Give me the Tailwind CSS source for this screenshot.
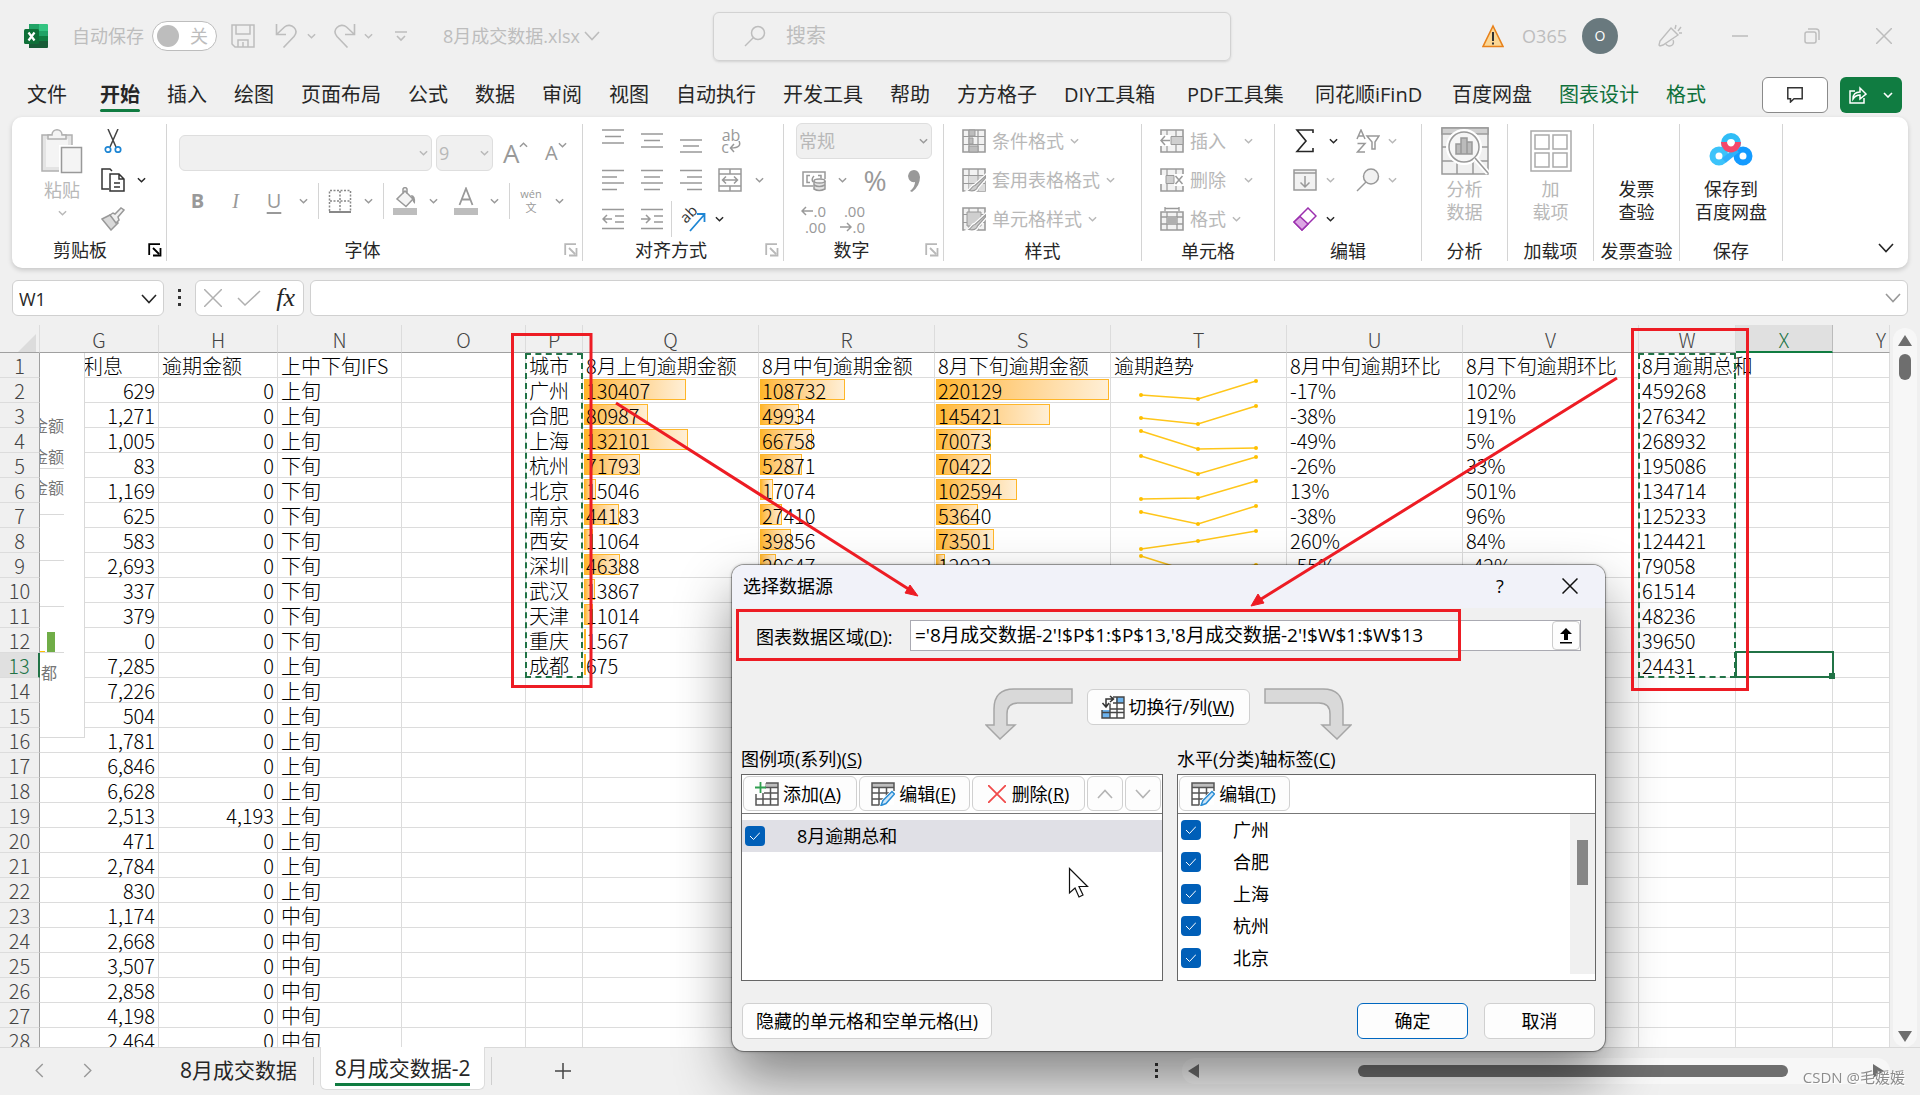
<!DOCTYPE html>
<html lang="zh-CN">
<head>
<meta charset="utf-8">
<meta name="viewport" content="width=device-width, initial-scale=1">
<title>8月成交数据.xlsx - Excel</title>
<script src="https://cdn.jsdelivr.net/npm/@tailwindcss/browser@4"></script>
</head>
<body class="relative flex h-screen flex-col overflow-hidden bg-[#f0f0f0] font-['Open_Sans','Noto_Sans_CJK_SC',sans-serif] text-lg text-[#262626]">

<svg class="hidden" aria-hidden="true">
  <symbol id="chev" viewBox="0 0 10 6"><path d="M1 1l4 4 4-4" fill="none" stroke="currentColor" stroke-width="1.6"/></symbol>
  <symbol id="chevL" viewBox="0 0 16 10"><path d="M1 1l7 7.5L15 1" fill="none" stroke="currentColor" stroke-width="1.6"/></symbol>
  <symbol id="launch" viewBox="0 0 14 14"><path d="M1.2 12V1.2H12M5 5l6 6M12.500 5v7.500H5" fill="none" stroke="currentColor" stroke-width="1.8"/></symbol>
  <symbol id="gridIcon" viewBox="0 0 24 24"><path d="M1 1h22v22H1z" fill="#f2f2f2" stroke="#9a9a9a" stroke-width="1.6"/><path d="M1 7.500h22M1 15.500h22M7 1v22M16 1v22" stroke="#9a9a9a" stroke-width="1.2" fill="none"/></symbol>
  <symbol id="brushOver" viewBox="0 0 24 24"><path d="M24 7L13 17c-3 0-3 4-7 6 5 1.500 9 0 10-4L24 10z" fill="#c4c4c4" stroke="#fff" stroke-width="3"/><path d="M23.500 8L13 17.500c-3 0-3 3.500-6 5 4 1 8 0 8.500-3.500L23.500 10z" fill="#cfcfcf" stroke="#9a9a9a" stroke-width="1.2"/></symbol>
  <symbol id="editTable" viewBox="0 0 24 24"><path d="M1 1h22v22H1z" fill="#fff"/><path d="M1 1h22v4H1z" fill="#bdbdbd"/><path d="M11 23H1V1h22v8M1 5.500h22M1 11h17M1 17h12M8 5v18M15.500 5v9" fill="none" stroke="#555" stroke-width="1.500"/><path d="M10 23.500l2-5L21 9.500l2.500 2.500-8.500 9.500z" fill="#9fd0f5" stroke="#fff" stroke-width="3"/><path d="M10 23.500l2-5L21 9.500l2.500 2.500-8.500 9.500z" fill="#cfe6f8" stroke="#2a8dd4" stroke-width="1.500"/></symbol>
</svg>

<!-- Title bar -->
<header class="grid h-[72px] shrink-0 grid-cols-[713fr_518fr_689fr] items-center text-[#bdbdbd]">
  <div class="flex items-center pl-6">
    <svg class="h-6 w-6" viewBox="0 0 24 24"><path d="M5 1h19v22H5z" fill="#21a366"/><path d="M15 0h8a1 1 0 011 1v6h-9z" fill="#33c481"/><path d="M5 0h10v7H5z" fill="#21a366"/><path d="M5 7h10v10H5z" fill="#107c41"/><path d="M15 12h9v5h-9z" fill="#107c41"/><path d="M5 17h19v6a1 1 0 01-1 1H5z" fill="#185c37"/><rect y="5" width="15" height="15" rx="1.500" fill="#0f7038"/><path d="M4.500 8.500l6 8M10.500 8.500l-6 8" stroke="#fff" stroke-width="2.200"/></svg>
    <label class="ml-6 flex items-center gap-2">自动保存
      <input type="checkbox" class="sr-only">
      <span class="flex h-[30px] w-[65px] items-center justify-between rounded-full border-[1.5px] border-[#bdbdbd] bg-white pr-2 pl-1"><span class="h-[22px] w-[22px] rounded-full bg-[#bdbdbd]"></span>关</span>
    </label>
    <button aria-label="保存" class="ml-[14px]"><svg class="h-6 w-6" viewBox="0 0 24 24" fill="none" stroke="currentColor" stroke-width="1.500"><path d="M1 1h22v22H4l-3-3zM5 1v9h14V1M7 23v-7h10v7M12 18v5"/></svg></button>
    <button aria-label="撤消" class="ml-5"><svg class="h-6 w-6" viewBox="0 0 24 24" fill="none" stroke="currentColor" stroke-width="1.600"><path d="M1.500 0v10.500H11M1.500 10.500L9.500 3c3-2.500 7-2 9.500.500s2.500 6 0 9L8.500 23.500"/></svg></button>
    <svg class="ml-2 h-[6px] w-[9px]"><use href="#chev"/></svg>
    <button aria-label="恢复" class="ml-4"><svg class="h-6 w-6" viewBox="0 0 24 24" fill="none" stroke="currentColor" stroke-width="1.600"><path d="M22.500 0v10.500H13M22.500 10.500L14.500 3c-3-2.500-7-2-9.500.500s-2.500 6 0 9l10.500 11"/></svg></button>
    <svg class="ml-2 h-[6px] w-[9px]"><use href="#chev"/></svg>
    <svg class="ml-[22px] h-3 w-3" viewBox="0 0 12 12" fill="none" stroke="currentColor" stroke-width="1.600"><path d="M0 2h12M2 6l4 4 4-4"/></svg>
    <span class="ml-9">8月成交数据.xlsx</span>
    <svg class="ml-1 h-[10px] w-4"><use href="#chevL"/></svg>
  </div>
  <label class="flex h-[49px] items-center gap-5 rounded-md border border-[#d2d2d2] pl-[30px] text-xl shadow-sm">
    <svg class="h-[22px] w-[22px]" viewBox="0 0 22 22" fill="none" stroke="currentColor" stroke-width="1.500"><circle cx="14" cy="8" r="6.500"/><path d="M9.500 12.500L1 21"/></svg>
    <input aria-label="搜索" placeholder="搜索" class="w-full flex-1 bg-transparent outline-none placeholder:text-[#bdbdbd]">
  </label>
  <div class="flex items-center justify-end">
    <svg class="mr-[18px] h-6 w-[22px]" viewBox="0 0 22 24"><path d="M11 2L21 22.500H1z" fill="#fbd795" stroke="#e8811a" stroke-width="1.600"/><path d="M11 8v9M11 18.500v2" stroke="#333" stroke-width="2"/></svg>
    <span class="mr-[15px]">O365</span>
    <span class="mr-[18px] grid h-9 w-9 place-items-center rounded-full bg-[#69797e] text-sm text-white">O</span>
    <button aria-label="即将推出" class="grid w-[68px] place-items-center"><svg class="h-6 w-6" viewBox="0 0 24 24" fill="none" stroke="currentColor" stroke-width="1.400"><path d="M13 4l7 7L5 21l-3 1-1-1 1-4zM8 20a4 4 0 007-4M17 5l1-4M20 7l3-4M21 9h3"/></svg></button>
    <button aria-label="最小化" class="grid w-[72px] place-items-center"><svg class="h-4 w-4" viewBox="0 0 16 16"><path d="M0 8h16" stroke="currentColor" stroke-width="1.500"/></svg></button>
    <button aria-label="还原" class="grid w-[72px] place-items-center"><svg class="h-4 w-4" viewBox="0 0 16 16" fill="none" stroke="currentColor" stroke-width="1.500"><rect x="1" y="4" width="11" height="11" rx="2"/><path d="M4 1h8a3 3 0 013 3v8"/></svg></button>
    <button aria-label="关闭" class="grid w-[72px] place-items-center"><svg class="h-4 w-4" viewBox="0 0 16 16"><path d="M0 0l16 16M16 0L0 16" stroke="currentColor" stroke-width="1.500"/></svg></button>
  </div>
</header>

<!-- Ribbon tabs -->
<nav class="flex h-[45px] shrink-0 items-center gap-[27px] pr-[18px] pl-[27px] text-xl whitespace-nowrap">
  <a href="#" class="mr-[6px]">文件</a>
  <a href="#" class="relative font-bold">开始<span class="absolute inset-x-0 -bottom-[3px] h-[3px] rounded-sm bg-[#107c41]"></span></a>
  <a href="#">插入</a><a href="#">绘图</a><a href="#">页面布局</a><a href="#">公式</a><a href="#">数据</a><a href="#">审阅</a><a href="#">视图</a><a href="#">自动执行</a><a href="#">开发工具</a><a href="#">帮助</a><a href="#">方方格子</a><a href="#" class="min-w-24">DIY工具箱</a><a href="#" class="min-w-[101px]">PDF工具集</a><a href="#" class="min-w-[110px]">同花顺iFinD</a><a href="#">百度网盘</a>
  <a href="#" class="text-[#0f703b]">图表设计</a><a href="#" class="text-[#0f703b]">格式</a>
  <div class="ml-auto flex gap-3">
    <button aria-label="批注" class="grid h-9 w-[66px] place-items-center rounded-md border border-[#8a8a8a] bg-white"><svg class="h-4 w-4" viewBox="0 0 16 16" fill="none" stroke="#333" stroke-width="1.500"><path d="M.8.800h14.400v11H7L3.500 15v-3.200H.8z"/></svg></button>
    <button aria-label="共享" class="flex h-9 w-[62px] items-center justify-center gap-4 rounded-md bg-[#107c41] text-white"><svg class="h-[18px] w-[18px]" viewBox="0 0 18 18" fill="none" stroke="currentColor" stroke-width="1.500"><path d="M6 5H1v12h14v-5M4 13c0-5 3-7 7-7V2l6 6-6 5V9c-3 0-5 1-7 4z"/></svg><svg class="h-[6px] w-[10px]"><use href="#chev"/></svg></button>
  </div>
</nav>

<!-- Ribbon -->
<section class="mx-3 flex h-[151px] shrink-0 rounded-[10px] bg-white py-[7px] whitespace-nowrap text-[#b8b8b8] shadow-[0_2px_5px_rgba(0,0,0,0.18)]">
  <div class="flex w-[155px] shrink-0 flex-col border-r border-[#d4d4d4]">
    <div class="-mt-px flex flex-1">
      <button class="ml-[25px] flex w-[50px] flex-col items-center pt-[6px] leading-6">
        <svg class="h-[45px] w-[42px]" viewBox="0 0 42 45"><path d="M1 6h30v36H1z" fill="#e4e4e4" stroke="#b0b0b0" stroke-width="1.500"/><path d="M5 10h22v28H5z" fill="#f4f4f4"/><path d="M7 10V6h4c0-7 10-7 10 0h4v4z" fill="#f4f4f4" stroke="#b0b0b0" stroke-width="1.500"/><path d="M20 18h21v26H20z" fill="#f4f4f4" stroke="#fff" stroke-width="4"/><path d="M20.500 18.500h20v25h-20z" fill="#f4f4f4" stroke="#999" stroke-width="1.500"/></svg>
        <span class="mt-1">粘贴</span>
        <svg class="mt-2 h-[6px] w-[9px]"><use href="#chev"/></svg>
      </button>
      <div class="-mt-[2px] ml-[14px] flex flex-col text-[#262626]">
        <button aria-label="剪切" class="flex h-[39px] w-6 items-center justify-center"><svg class="h-6 w-[18px]" viewBox="0 0 18 24" fill="none"><path d="M4 0l8 18M14 0L6 18" stroke="#444" stroke-width="1.500"/><circle cx="4" cy="20.500" r="2.700" stroke="#1e86d4" stroke-width="1.700"/><circle cx="14" cy="20.500" r="2.700" stroke="#1e86d4" stroke-width="1.700"/></svg></button>
        <button aria-label="复制" class="flex h-[39px] items-center gap-3"><svg class="h-6 w-6" viewBox="0 0 24 24" fill="#fff" stroke="#333" stroke-width="1.500"><path d="M8 21H1V1h8l2 2"/><path d="M9 6h9l5 5v12H9zM18 6v5h5M13 15h6M13 19h6"/></svg><svg class="h-[6px] w-[9px]"><use href="#chev"/></svg></button>
        <button aria-label="格式刷" class="flex h-[39px] items-center"><svg class="h-6 w-6" viewBox="0 0 24 24" stroke="#999" stroke-width="1.500"><path d="M1 12l8-4 8 8-7 7z" fill="#d9d9d9"/><path d="M9 8l3-2 2 1 6-6 3 2-6 7 1 3-3 3z" fill="#f0f0f0"/></svg></button>
      </div>
    </div>
    <div class="flex h-[22px] items-center text-black"><span class="flex-1 text-center leading-6 text-[#262626]">剪贴板</span><svg class="mr-1 h-[14px] w-[14px]"><use href="#launch"/></svg></div>
  </div>

  <div class="flex w-[416px] shrink-0 flex-col border-r border-[#d4d4d4]">
    <div class="flex-1 pt-[11px] pl-3">
      <div class="flex h-9 items-center gap-1">
        <div class="grid w-[253px] items-center"><select aria-label="字体" disabled class="col-start-1 row-start-1 h-9 w-full appearance-none rounded-md border border-[#dedede] bg-[#f0f0f0]"><option></option></select><svg class="col-start-1 row-start-1 mr-1 h-[6px] w-[9px] justify-self-end"><use href="#chev"/></svg></div>
        <div class="grid w-[57px] items-center"><select aria-label="字号" disabled class="col-start-1 row-start-1 h-9 w-full appearance-none rounded-md border border-[#dedede] bg-[#f0f0f0] pl-[2px]"><option>9</option></select><svg class="col-start-1 row-start-1 mr-1 h-[6px] w-[9px] justify-self-end"><use href="#chev"/></svg></div>
        <button aria-label="增大字号" class="ml-[6px] flex h-9 w-[38px] items-center text-[26px] text-[#999]">A<svg class="mb-4 h-[6px] w-[9px] rotate-180"><use href="#chev"/></svg></button>
        <button aria-label="减小字号" class="flex h-9 w-[30px] items-center text-xl text-[#999]">A<svg class="mb-4 h-[6px] w-[9px]"><use href="#chev"/></svg></button>
      </div>
      <div class="mt-3 flex h-9 items-center text-xl text-[#999]">
        <button class="w-[37px] font-bold">B</button>
        <button class="w-[39px] font-['Liberation_Serif',serif] italic">I</button>
        <button class="ml-px w-9 underline underline-offset-4">U</button>
        <span class="grid w-[22px] place-items-center"><svg class="h-[6px] w-[9px]"><use href="#chev"/></svg></span>
        <span class="mr-[3px] ml-1 h-9 w-px bg-[#d4d4d4]"></span>
        <button aria-label="边框" class="grid w-9 place-items-center"><svg class="h-6 w-6" viewBox="0 0 24 24" fill="none" stroke="#888"><path d="M1.500 22V1.500h21V22M12 2v20M2 12h20" stroke-width="1.500" stroke-dasharray="2 1.500"/><path d="M1 23h22" stroke-width="2"/></svg></button>
        <span class="grid w-5 place-items-center"><svg class="h-[6px] w-[9px]"><use href="#chev"/></svg></span>
        <span class="mr-[3px] ml-[5px] h-9 w-px bg-[#d4d4d4]"></span>
        <button aria-label="填充颜色" class="grid w-9 place-items-center"><svg class="h-7 w-6" viewBox="0 0 24 28"><path d="M12 4l8 8-7 7.500L4 12zM10 7V2q2-3 4 0v5" fill="#f4f4f4" stroke="#999" stroke-width="1.500"/><path d="M18 8q5 0 4 9-2-1-3-5z" fill="#999"/><path d="M0 21h24v7H0z" fill="#bdbdbd"/></svg></button>
        <span class="mr-[5px] grid w-5 place-items-center"><svg class="h-[6px] w-[9px]"><use href="#chev"/></svg></span>
        <button aria-label="字体颜色" class="grid w-9 place-items-center"><svg class="h-7 w-6" viewBox="0 0 24 28"><path d="M5.500 18L12 1.500 18.500 18M8 12.500h8" fill="none" stroke="#999" stroke-width="1.800"/><path d="M0 21h24v7H0z" fill="#bdbdbd"/></svg></button>
        <span class="grid w-5 place-items-center"><svg class="h-[6px] w-[9px]"><use href="#chev"/></svg></span>
        <span class="mr-[3px] ml-[5px] h-9 w-px bg-[#d4d4d4]"></span>
        <button class="flex w-9 flex-col items-center text-[11px] leading-[14px]"><span>wén</span><span>文</span></button>
        <span class="grid w-5 place-items-center"><svg class="h-[6px] w-[9px]"><use href="#chev"/></svg></span>
      </div>
    </div>
    <div class="flex h-[22px] items-center"><span class="flex-1 pr-[6px] text-center leading-6 text-[#262626]">字体</span><svg class="mr-1 h-[14px] w-[14px]"><use href="#launch"/></svg></div>
  </div>

  <div class="flex w-[201px] shrink-0 flex-col border-r border-[#d4d4d4]">
    <div class="-mt-[3px] flex-1 pl-[10px] text-[#999]">
      <div class="flex h-[39px] items-center">
        <button aria-label="顶端对齐" class="grid w-[39px] place-items-center"><svg class="h-6 w-[22px]" viewBox="0 0 22 24" stroke="currentColor" stroke-width="1.500"><path d="M0 1h22M3 7.500h16M0 14h22"/></svg></button>
        <button aria-label="垂直居中" class="grid w-[39px] place-items-center"><svg class="h-6 w-[22px]" viewBox="0 0 22 24" stroke="currentColor" stroke-width="1.500"><path d="M0 5h22M3 11.500h16M0 18h22"/></svg></button>
        <button aria-label="底端对齐" class="grid w-[39px] place-items-center"><svg class="h-6 w-[22px]" viewBox="0 0 22 24" stroke="currentColor" stroke-width="1.500"><path d="M0 11h22M3 17h16M0 23h22"/></svg></button>
        <button aria-label="自动换行" class="flex w-[42px] flex-col items-center text-base leading-3"><span>ab</span><span class="flex items-center">c<svg class="h-3 w-3" viewBox="0 0 12 12" fill="none" stroke="currentColor" stroke-width="1.500"><path d="M10 0c2 4 0 7-8 7M5 3L1.500 7 5 11"/></svg></span></button>
      </div>
      <div class="flex h-[39px] items-center">
        <button aria-label="左对齐" class="grid w-[39px] place-items-center"><svg class="h-6 w-[22px]" viewBox="0 0 22 24" stroke="currentColor" stroke-width="1.500"><path d="M0 2.500h22M0 9h15M0 15h22M0 21.500h15"/></svg></button>
        <button aria-label="居中" class="grid w-[39px] place-items-center"><svg class="h-6 w-[22px]" viewBox="0 0 22 24" stroke="currentColor" stroke-width="1.500"><path d="M0 2.500h22M3 9h16M0 15h22M3 21.500h16"/></svg></button>
        <button aria-label="右对齐" class="grid w-[39px] place-items-center"><svg class="h-6 w-[22px]" viewBox="0 0 22 24" stroke="currentColor" stroke-width="1.500"><path d="M0 2.500h22M7 9h15M0 15h22M7 21.500h15"/></svg></button>
        <button aria-label="合并后居中" class="grid w-[39px] place-items-center"><svg class="h-6 w-6" viewBox="0 0 24 24" fill="none" stroke="#999" stroke-width="1.500"><path d="M1 1h22v22H1zM1 6h22M1 18h22M12 1v5M12 18v5M5 12h14M8 8.500L4.500 12 8 15.500M16 8.500l3.500 3.500-3.500 3.500"/></svg></button>
        <span class="grid w-5 place-items-center"><svg class="h-[6px] w-[9px]"><use href="#chev"/></svg></span>
      </div>
      <div class="flex h-[39px] items-center">
        <button aria-label="减少缩进" class="grid w-[39px] place-items-center"><svg class="h-6 w-[22px]" viewBox="0 0 22 24" fill="none" stroke="currentColor" stroke-width="1.500"><path d="M0 2.500h22M13 9h9M13 15h9M0 21.500h22M1 12h9M5 8l-4 4 4 4"/></svg></button>
        <button aria-label="增加缩进" class="grid w-[39px] place-items-center"><svg class="h-6 w-[22px]" viewBox="0 0 22 24" fill="none" stroke="currentColor" stroke-width="1.500"><path d="M0 2.500h22M13 9h9M13 15h9M0 21.500h22M0 12h9M5 8l4 4-4 4"/></svg></button>
        <span class="h-9 w-px bg-[#d4d4d4]"></span>
        <button aria-label="方向" class="flex w-[52px] items-center justify-end gap-2 text-[#262626]"><svg class="h-7 w-7 overflow-visible" viewBox="0 0 28 28" fill="none"><text x="7" y="19" transform="rotate(-45 7 19)" font-size="15" fill="#333">ab</text><path d="M11 26L25 10M18 9h7.500v8" stroke="#1e86d4" stroke-width="1.800"/></svg><svg class="h-[6px] w-[9px]"><use href="#chev"/></svg></button>
      </div>
    </div>
    <div class="flex h-[22px] items-center"><span class="flex-1 pr-[6px] text-center leading-6 text-[#262626]">对齐方式</span><svg class="mr-1 h-[14px] w-[14px]"><use href="#launch"/></svg></div>
  </div>

  <div class="flex w-[160px] shrink-0 flex-col border-r border-[#d4d4d4]">
    <div class="-mt-[3px] flex-1 pl-3 text-[#999]">
      <div class="grid h-[39px] w-[136px] items-center"><select aria-label="数字格式" disabled class="col-start-1 row-start-1 h-9 w-full appearance-none rounded-md border border-[#dedede] bg-[#f0f0f0] pl-[2px] text-[#b8b8b8]"><option>常规</option></select><svg class="col-start-1 row-start-1 mr-1 h-[6px] w-[9px] justify-self-end"><use href="#chev"/></svg></div>
      <div class="flex h-[39px] items-center">
        <button aria-label="会计数字格式" class="grid w-9 place-items-center"><svg class="h-6 w-6" viewBox="0 0 24 24" fill="none" stroke="#999" stroke-width="1.500"><path d="M11 18H1V4h22v7M8 7.500H5v7h3M12 8q-3 3-1 6M16 7.500h3v3"/><path d="M12 13v8q5 3 11 0v-8" fill="#e4e4e4"/><ellipse cx="17.500" cy="13" rx="5.500" ry="2" fill="#f4f4f4"/><path d="M12 17q5 3 11 0"/></svg></button>
        <span class="grid w-5 place-items-center"><svg class="h-[6px] w-[9px]"><use href="#chev"/></svg></span>
        <button class="w-[46px] text-[28px] leading-8">%</button>
        <button aria-label="千位分隔样式" class="grid w-8 place-items-center"><svg class="h-6 w-3" viewBox="0 0 12 24"><path d="M2 23q5-4 5-9-6 1-7-6 1-6 6-6t6 7q0 9-8 15z" fill="#999"/></svg></button>
      </div>
      <div class="flex h-[39px] items-center text-[15px] leading-[16px]">
        <button aria-label="增加小数位数" class="w-[30px]"><span class="flex items-center justify-end"><svg class="h-[10px] w-3" viewBox="0 0 12 10" fill="none" stroke="currentColor" stroke-width="1.500"><path d="M12 5H1M5 1L1 5l4 4"/></svg>.0</span><span class="block text-right">.00</span></button>
        <button aria-label="减少小数位数" class="w-[39px]"><span class="block text-right">.00</span><span class="flex items-center justify-end"><svg class="h-[10px] w-3" viewBox="0 0 12 10" fill="none" stroke="currentColor" stroke-width="1.500"><path d="M0 5h11M7 1l4 4-4 4"/></svg>.0</span></button>
      </div>
    </div>
    <div class="flex h-[22px] items-center"><span class="flex-1 pr-[6px] text-center leading-6 text-[#262626]">数字</span><svg class="mr-1 h-[14px] w-[14px]"><use href="#launch"/></svg></div>
  </div>

  <div class="flex w-[198px] shrink-0 flex-col border-r border-[#d4d4d4]">
    <div class="-mt-[3px] flex flex-1 flex-col items-start pl-[18px]">
      <button class="flex h-[39px] items-center gap-[6px]"><svg class="h-6 w-6" viewBox="0 0 24 24"><use href="#gridIcon"/><path d="M7 1h6v6H7zM7 9h4v6H7zM7 17h9v6H7z" fill="#bdbdbd" stroke="#9a9a9a"/></svg>条件格式<svg class="h-[6px] w-[9px]"><use href="#chev"/></svg></button>
      <button class="flex h-[39px] items-center gap-[6px]"><svg class="h-6 w-6" viewBox="0 0 24 24"><use href="#gridIcon"/><path d="M7 8h16v15H7z" fill="#dcdcdc"/><path d="M7 15.500h16M16 8v15" stroke="#9a9a9a"/><use href="#brushOver"/></svg>套用表格格式<svg class="h-[6px] w-[9px]"><use href="#chev"/></svg></button>
      <button class="flex h-[39px] items-center gap-[6px]"><svg class="h-6 w-6" viewBox="0 0 24 24"><use href="#gridIcon"/><path d="M5 5h14v14H5z" fill="#cfcfcf" stroke="#9a9a9a"/><use href="#brushOver"/></svg>单元格样式<svg class="h-[6px] w-[9px]"><use href="#chev"/></svg></button>
    </div>
    <div class="h-[22px] text-center leading-6 text-[#262626]">样式</div>
  </div>

  <div class="flex w-[133px] shrink-0 flex-col border-r border-[#d4d4d4]">
    <div class="-mt-[3px] flex flex-1 flex-col items-start pl-[18px]">
      <button class="flex h-[39px] items-center gap-[6px]"><svg class="h-6 w-6" viewBox="0 0 24 24"><use href="#gridIcon"/><path d="M0 6h11v11H0z" fill="#fff"/><path d="M11 7.500h12v8H11z" fill="#cfcfcf" stroke="#9a9a9a"/><path d="M10 11.500H1M5 7l-4 4.500L5 16" fill="none" stroke="#9a9a9a" stroke-width="1.500"/></svg>插入<svg class="ml-3 h-[6px] w-[9px]"><use href="#chev"/></svg></button>
      <button class="flex h-[39px] items-center gap-[6px]"><svg class="h-6 w-6" viewBox="0 0 24 24"><use href="#gridIcon"/><path d="M0 7h6v9H0zM14 6h10v12H14z" fill="#fff"/><path d="M6 7.500h8v8H6z" fill="#cfcfcf" stroke="#9a9a9a"/><path d="M15.500 8l7 8M22.500 8l-7 8" stroke="#9a9a9a" stroke-width="1.500"/></svg>删除<svg class="ml-3 h-[6px] w-[9px]"><use href="#chev"/></svg></button>
      <button class="flex h-[39px] items-center gap-[6px]"><svg class="h-6 w-6" viewBox="0 0 24 24"><path d="M1 5h22v18H1z" fill="#f2f2f2" stroke="#9a9a9a" stroke-width="1.600"/><path d="M1 10h22M1 17h22M7 5v18M17 5v18M5 1.500h14M5 0v4M19 0v4" stroke="#9a9a9a" stroke-width="1.300"/><path d="M7 10h10v7H7z" fill="#b0b0b0"/></svg>格式<svg class="h-[6px] w-[9px]"><use href="#chev"/></svg></button>
    </div>
    <div class="h-[22px] text-center leading-6 text-[#262626]">单元格</div>
  </div>

  <div class="flex w-[147px] shrink-0 flex-col border-r border-[#d4d4d4]">
    <div class="-mt-[3px] grid flex-1 grid-cols-[63px_1fr] grid-rows-[39px_39px_39px] items-center pl-[18px]">
      <button aria-label="自动求和" class="flex items-center gap-3 text-[#262626]"><svg class="h-6 w-6" viewBox="0 0 24 24" fill="none" stroke="currentColor" stroke-width="1.600"><path d="M20 4V1H4l9 11L4 22.500h16V19"/></svg><svg class="h-[6px] w-[9px]"><use href="#chev"/></svg></button>
      <button aria-label="排序和筛选" class="flex items-center gap-2"><svg class="h-6 w-6" viewBox="0 0 24 24" fill="none" stroke="#999" stroke-width="1.500"><path d="M1 10L5 1l4 9M2.500 7h5M1.500 14.500H9L1.500 23H9M11 7h12l-4 6v7h-3v-7z"/></svg><svg class="h-[6px] w-[9px]"><use href="#chev"/></svg></button>
      <button aria-label="填充" class="flex items-center gap-[9px]"><svg class="h-6 w-6" viewBox="0 0 24 24" fill="none" stroke="#999" stroke-width="1.500"><path d="M1 2h22v20H1z" fill="#f2f2f2"/><path d="M1 5h22M12 8v11M7.500 14.500L12 19l4.500-4.500"/></svg><svg class="h-[6px] w-[9px]"><use href="#chev"/></svg></button>
      <button aria-label="查找和选择" class="flex items-center gap-2"><svg class="h-6 w-6" viewBox="0 0 24 24" fill="none" stroke="#999" stroke-width="1.500"><circle cx="15" cy="8.500" r="7.500" fill="#f2f2f2"/><path d="M10 14l-9 9"/></svg><svg class="h-[6px] w-[9px]"><use href="#chev"/></svg></button>
      <button aria-label="清除" class="flex items-center gap-[9px] text-[#262626]"><svg class="h-6 w-6" viewBox="0 0 24 24" stroke="#9b2fae" stroke-width="1.500"><path d="M15 1l8 8L9 23 1 15z" fill="#fff"/><path d="M7 9.500l8 7.500-6 6-8-8z" fill="#dca6e4"/></svg><svg class="h-[6px] w-[9px]"><use href="#chev"/></svg></button>
    </div>
    <div class="h-[22px] text-center leading-6 text-[#262626]">编辑</div>
  </div>

  <div class="flex w-[86px] shrink-0 flex-col border-r border-[#d4d4d4]">
    <button class="flex flex-1 flex-col items-center pt-[3px] leading-[23px]"><svg class="mb-[3px] h-12 w-12" viewBox="0 0 48 48" fill="none" stroke="#999" stroke-width="1.500"><path d="M1 1h46v46H1z" fill="#f0f0f0"/><path d="M1 1h46v6H1z" fill="#d0d0d0"/><path d="M1 20h46M1 34h46M16 7v40M32 7v40"/><circle cx="23" cy="20" r="16" fill="#f6f6f6" stroke="#fff" stroke-width="4"/><circle cx="23" cy="20" r="15" fill="#f6f6f6"/><path d="M34 31l13 15" stroke="#fff" stroke-width="5"/><path d="M34 31l13 15"/><path d="M15 17h5v10h-5zM20 11h6v16h-6zM26 15h5v12h-5z" fill="#bbb"/></svg><span>分析<br>数据</span></button>
    <div class="h-[22px] text-center leading-6 text-[#262626]">分析</div>
  </div>
  <div class="flex w-[86px] shrink-0 flex-col border-r border-[#d4d4d4]">
    <button class="flex flex-1 flex-col items-center pt-[3px] leading-[23px]"><svg class="mb-[3px] h-12 w-12" viewBox="0 0 48 48" fill="none" stroke="#aaa" stroke-width="1.500"><path d="M4 4h40v40H4zM8 8h14v14H8zM26 8h14v14H26zM8 26h14v14H8zM26 26h14v14H26z"/></svg><span>加<br>载项</span></button>
    <div class="h-[22px] text-center leading-6 text-[#262626]">加载项</div>
  </div>
  <div class="flex w-[86px] shrink-0 flex-col border-r border-[#d4d4d4] text-[#262626]">
    <button class="flex flex-1 flex-col items-center pt-[54px] leading-[23px]"><span>发票<br>查验</span></button>
    <div class="h-[22px] text-center leading-6">发票查验</div>
  </div>
  <div class="flex w-[103px] shrink-0 flex-col border-r border-[#d4d4d4] text-[#262626]">
    <button class="flex flex-1 flex-col items-center pt-[3px] leading-[23px]"><svg class="mb-[3px] h-12 w-12" viewBox="0 0 48 48" fill="none" stroke-width="6"><circle cx="12" cy="29" r="6.500" stroke="#3cc3fa"/><circle cx="36" cy="29" r="6.500" stroke="#149bff"/><path d="M17 33.500L30 23" stroke="#2fb0fb"/><circle cx="24" cy="16" r="7" stroke="#30bdf6"/><path d="M17 15a7 7.500 0 0014 0" stroke="#f4476b"/></svg><span>保存到<br>百度网盘</span></button>
    <div class="h-[22px] text-center leading-6">保存</div>
  </div>
  <button aria-label="折叠功能区" class="mt-auto mr-[14px] mb-2 ml-auto text-[#262626]"><svg class="h-[10px] w-4"><use href="#chevL"/></svg></button>
</section>

<!-- Formula bar -->
<section class="mx-3 mt-3 mb-[9px] flex h-9 shrink-0 items-center">
  <label class="flex h-full w-[152px] items-center rounded-md border border-[#d0d0d0] bg-white pt-px pr-[6px] pl-[6px]"><input aria-label="名称框" value="W1" class="w-full min-w-0 flex-1 outline-none"><svg class="h-[10px] w-4"><use href="#chevL"/></svg></label>
  <svg class="mx-[14px] h-5 w-[3px]" viewBox="0 0 3 20" fill="#333"><path d="M0 1h3v3H0zM0 8h3v3H0zM0 15h3v3H0z"/></svg>
  <div class="flex h-full w-[109px] items-center justify-between rounded-md border border-[#d0d0d0] bg-white px-2">
    <button aria-label="取消输入"><svg class="h-[18px] w-[18px]" viewBox="0 0 18 18"><path d="M0 0l18 18M18 0L0 18" stroke="#b0b0b0" stroke-width="1.500"/></svg></button>
    <button aria-label="输入"><svg class="h-4 w-6" viewBox="0 0 24 16" fill="none"><path d="M1 8l7 7L23 1" stroke="#b0b0b0" stroke-width="1.500"/></svg></button>
    <button class="font-['Liberation_Serif',serif] text-[26px] leading-7 italic">fx</button>
  </div>
  <label class="ml-[6px] flex h-full flex-1 items-center rounded-md border border-[#d0d0d0] bg-white pr-[6px] pl-2 text-[#999]"><input aria-label="编辑栏" class="flex-1 outline-none"><svg class="h-[10px] w-4"><use href="#chevL"/></svg></label>
</section>

<!-- Worksheet -->
<main class="flex min-h-0 flex-1">
  <div class="relative flex-1 overflow-hidden">
    <table class="w-full table-fixed border-separate border-spacing-0 bg-white font-['Noto_Sans_CJK_SC',sans-serif] text-xl font-light whitespace-nowrap text-black">
      <colgroup><col class="w-10"><col class="w-[119px]"><col class="w-[119px]"><col class="w-[124px]"><col class="w-[124px]"><col class="w-[57px]"><col class="w-[176px]"><col class="w-[176px]"><col class="w-[176px]"><col class="w-[176px]"><col class="w-[176px]"><col class="w-[176px]"><col class="w-[97px]"><col class="w-[97px]"><col></colgroup>
      <thead><tr id="cols" class="h-7"></tr></thead>
      <tbody id="rows"></tbody>
    </table>
    <!-- chart that is partly scrolled out of view -->
    <div class="absolute top-7 left-10 h-[385px] w-[45px] overflow-hidden border-r border-b border-[#d9d9d9] bg-white text-base whitespace-nowrap text-[#767676]">
      <div class="absolute top-[58px] right-5 leading-[31px]">金额<br>金额<br>金额</div>
      <div class="absolute top-[115px] left-0 h-[185px] w-6 bg-[repeating-linear-gradient(#d9d9d9_0_1px,transparent_1px_46px)]"></div>
      <div class="absolute top-[279px] left-[7px] h-5 w-2 bg-[#70ad47]"></div>
      <div class="absolute top-[298px] left-0 h-px w-[5px] bg-[#ffc000]"></div>
      <div class="absolute top-[308px] left-px">都</div>
    </div>
    <!-- copied ranges and active cell -->
    <div class="absolute top-7 left-[525px] h-[325px] w-[58px] border-2 border-dashed border-[#217346]"></div>
    <div class="absolute top-7 left-[1638px] h-[325px] w-[98px] border-2 border-dashed border-[#217346]"></div>
    <div class="absolute top-[326px] left-[1735px] h-[27px] w-[99px] border-2 border-[#217346]"><span class="absolute -right-[3px] -bottom-[3px] h-[6px] w-[6px] bg-[#217346]"></span></div>
  </div>
  <div class="flex w-[30px] shrink-0 flex-col items-center pt-[3px]">
    <div class="flex w-6 flex-1 flex-col items-center rounded-full bg-[#f7f7f7] pt-[7px] pb-[5px]">
      <svg class="h-[11px] w-[14px]" viewBox="0 0 14 11"><path d="M7 0l7 11H0z" fill="#6e6e6e"/></svg>
      <span class="mt-2 h-[26px] w-3 rounded-full bg-[#6e6e6e]"></span>
      <svg class="mt-auto h-[11px] w-[14px]" viewBox="0 0 14 11"><path d="M7 11l7-11H0z" fill="#6e6e6e"/></svg>
    </div>
  </div>
</main>

<!-- Sheet tabs -->
<footer class="flex h-12 shrink-0 items-center border-t border-[#d9d9d9] pb-[2px] text-[21px] whitespace-nowrap">
  <button aria-label="上一张" class="ml-[33px]"><svg class="h-[15px] w-3" viewBox="0 0 10 16" fill="none" stroke="#999" stroke-width="1.500"><path d="M9 1L2 8l7 7"/></svg></button>
  <button aria-label="下一张" class="ml-[37px]"><svg class="h-[15px] w-3" viewBox="0 0 10 16" fill="none" stroke="#999" stroke-width="1.500"><path d="M1 1l7 7-7 7"/></svg></button>
  <button class="ml-[86px]">8月成交数据</button>
  <span class="ml-4 h-7 w-px bg-[#cfcfcf]"></span>
  <button class="-mt-[1px] ml-[6px] flex h-[43px] w-[165px] justify-center self-start rounded-b-md border-x border-b border-[#dcdcdc] bg-white"><span class="mt-[5px] h-[34px] border-b-[3px] border-[#107c41]">8月成交数据-2</span></button>
  <span class="ml-[6px] h-7 w-px bg-[#cfcfcf]"></span>
  <button aria-label="新工作表" class="ml-[63px]"><svg class="h-4 w-4" viewBox="0 0 16 16"><path d="M8 0v16M0 8h16" stroke="#444" stroke-width="1.500"/></svg></button>
  <div class="mr-[30px] ml-auto flex w-[735px] items-center">
    <svg class="h-5 w-[3px]" viewBox="0 0 3 20" fill="#333"><path d="M0 2h3v3H0zM0 8h3v3H0zM0 14h3v3H0z"/></svg>
    <div class="ml-6 flex h-[26px] flex-1 items-center justify-between rounded-full bg-[#f7f7f7] px-[6px]">
      <svg class="h-[14px] w-[11px]" viewBox="0 0 11 14"><path d="M0 7l11-7v14z" fill="#6e6e6e"/></svg>
      <span class="ml-[73px] h-3 w-[430px] rounded-full bg-[#6e6e6e]"></span>
      <svg class="h-[14px] w-[11px]" viewBox="0 0 11 14"><path d="M11 7L0 0v14z" fill="#6e6e6e"/></svg>
    </div>
  </div>
</footer>

<!-- Select Data Source dialog -->
<div role="dialog" aria-label="选择数据源" class="absolute top-[565px] left-[732px] w-[873px] overflow-visible rounded-xl bg-[#f0f0f0] pb-[12px] whitespace-nowrap text-black shadow-[0_0_0_1px_rgba(0,0,0,0.3),0_0_3px_1px_rgba(0,0,0,0.2),0_28px_56px_rgba(0,0,0,0.45)]">
  <div class="flex h-[43px] items-center rounded-t-xl bg-[#f1f2f9] pb-[2px] pl-[11px]">
    <span class="flex-1">选择数据源</span>
    <button class="w-[68px]">?</button>
    <button aria-label="关闭" class="grid w-[71px] place-items-center"><svg class="h-4 w-4" viewBox="0 0 16 16"><path d="M.5.500l15 15M15.500.500l-15 15" stroke="#111" stroke-width="1.500"/></svg></button>
  </div>
  <div class="mt-3 flex h-[31px] items-center pr-[24px] pl-[24px]">
    <label for="range" class="w-[154px] pt-[2px]">图表数据区域(<u>D</u>):</label>
    <div class="flex h-full flex-1 border border-[#aaaab2] bg-white">
      <input id="range" class="min-w-0 flex-1 pl-1 text-[19px] outline-none" value="='8月成交数据-2'!$P$1:$P$13,'8月成交数据-2'!$W$1:$W$13">
      <button aria-label="折叠对话框" class="grid w-7 place-items-center rounded border border-[#ccc] bg-[#fdfdfd]"><svg class="h-4 w-3" viewBox="0 0 12 16"><path d="M6 0l6 6H8v6H4V6H0zM0 14h12v1.500H0z"/></svg></button>
    </div>
  </div>
  <div class="mt-[37px] flex h-[52px] items-start justify-center gap-[14px]">
    <svg class="h-[52px] w-[88px]" viewBox="0 0 88 52"><path d="M87 1H29Q9 1 9 21V37H1l14 14 15-14H22V26Q22 15 33 15H87z" fill="#d9d9d9" stroke="#a6a6a6" stroke-width="1.500"/></svg>
    <button class="mt-px flex h-9 w-[163px] items-center justify-center gap-1 rounded-md border border-[#d0d0d0] bg-[#fdfdfd] pr-[2px]"><svg class="h-6 w-6 shrink-0" viewBox="0 0 24 24" fill="none"><path d="M15 2h8v6h-8zM1 15h8v8H1z" fill="#6db3ee"/><path d="M12 2h11v21H1v-8M9 14h14M9 8.500v14M16 2v20.500M1 17.500h22M12 8h11" stroke="#444" stroke-width="1.400"/><path d="M5 11V4h7M9 1l3.500 3L9 7M1.500 8L5 12l3-4" stroke="#333" stroke-width="1.500"/></svg><span>切换行/列(<u>W</u>)</span></button>
    <svg class="h-[52px] w-[88px]" viewBox="0 0 88 52"><path d="M1 1H59Q79 1 79 21V37h8L73 51 58 37h8V26Q66 15 55 15H1z" fill="#d9d9d9" stroke="#a6a6a6" stroke-width="1.500"/></svg>
  </div>
  <div class="mt-[7px] grid grid-cols-[422px_419px] gap-x-[14px] pl-[9px]">
    <div class="h-[27px] leading-6">图例项(系列)(<u>S</u>)</div>
    <div class="h-[27px] leading-6">水平(分类)轴标签(<u>C</u>)</div>
    <div class="h-[207px] border border-[#666] bg-white">
      <div class="flex h-[39px] gap-[2px] border-b border-[#777] px-px pt-px pb-[2px]">
        <button class="flex w-[114px] items-center justify-center gap-1 rounded-md border border-[#d0d0d0] bg-[#fdfdfd] pr-1"><svg class="h-6 w-6" viewBox="0 0 24 24" fill="none"><path d="M10 1h13v4H10z" fill="#bdbdbd"/><path d="M11 1h12v22H1V12M10 5.500h13M9 11h14M1 17h22M8 11v12M15.500 5v18" stroke="#555" stroke-width="1.500"/><path d="M5.500 0v11M0 5.500h11" stroke="#2f9e4f" stroke-width="1.800"/></svg><span>添加(<u>A</u>)</span></button>
        <button class="flex w-[111px] items-center justify-center gap-1 rounded-md border border-[#d0d0d0] bg-[#fdfdfd] pr-[2px]"><svg class="h-6 w-6"><use href="#editTable"/></svg><span>编辑(<u>E</u>)</span></button>
        <button class="flex w-[113px] items-center justify-center gap-[6px] rounded-md border border-[#d0d0d0] bg-[#fdfdfd]"><svg class="h-[18px] w-[18px]" viewBox="0 0 18 18"><path d="M0 0l18 18M18 0L0 18" stroke="#f04a4a" stroke-width="1.800"/></svg><span>删除(<u>R</u>)</span></button>
        <button aria-label="上移" class="grid flex-1 place-items-center rounded-md border border-[#d0d0d0] bg-[#fdfdfd] text-[#b4b4b4]"><svg class="h-[10px] w-4 rotate-180"><use href="#chevL"/></svg></button>
        <button aria-label="下移" class="grid flex-1 place-items-center rounded-md border border-[#d0d0d0] bg-[#fdfdfd] text-[#b4b4b4]"><svg class="h-[10px] w-4"><use href="#chevL"/></svg></button>
      </div>
      <div id="series" class="mt-[6px]"></div>
    </div>
    <div class="flex h-[207px] flex-col border border-[#666] bg-white">
      <div class="flex h-[39px] shrink-0 border-b border-[#777] px-px pt-px pb-[2px]">
        <button class="flex w-[111px] items-center justify-center gap-1 rounded-md border border-[#d0d0d0] bg-[#fdfdfd] pr-[2px]"><svg class="h-6 w-6"><use href="#editTable"/></svg><span>编辑(<u>T</u>)</span></button>
      </div>
      <div class="flex h-[160px]">
        <div id="cats" class="flex-1"></div>
        <div class="w-[25px] bg-[#f0f0f0] pt-[26px]"><div class="mx-auto h-[45px] w-[11px] bg-[#868686]"></div></div>
      </div>
    </div>
  </div>
  <div class="mt-[22px] flex h-9 gap-4 pr-[10px] pl-[10px]">
    <button class="mr-auto w-[250px] rounded-md border border-[#d0d0d0] bg-[#fdfdfd]">隐藏的单元格和空单元格(<u>H</u>)</button>
    <button class="w-[111px] rounded-md border border-[#0067c0] bg-[#fdfdfd]">确定</button>
    <button class="w-[111px] rounded-md border border-[#d0d0d0] bg-[#fdfdfd]">取消</button>
  </div>
</div>

<!-- Annotations drawn over the window -->
<svg class="pointer-events-none absolute top-0 left-0 h-[1095px] w-[1920px]" fill="none" stroke="#ed1c24" stroke-width="3" aria-hidden="true">
  <path d="M512.500 334.500h78.500V686.500H512.500zM1632.500 329.500H1747.500V689.500H1632.500zM737.500 610.500H1459.500V659.500H737.500z"/>
  <path d="M616 403L910 590M1617 378L1258 601"/>
  <path d="M918 596l-13-3 5-8zM1251 606l13-3-6-9z" fill="#ed1c24" stroke-width="1"/>
  <path d="M1069.500 868.500v24.500l5.500-5 4 9 4-2-4-8.500h8.500z" fill="#fff" stroke="#111" stroke-width="1.200"/>
</svg>
<span class="absolute right-[15px] bottom-[6px] text-[15px] text-[#8c8c8c] drop-shadow-[1px_1px_0_white]">CSDN @毛媛媛</span>

<script>
const colNames = ['', 'G', 'H', 'N', 'O', 'P', 'Q', 'R', 'S', 'T', 'U', 'V', 'W', 'X', 'Y'];
const interest = ['应收利息','629','1,271','1,005','83','1,169','625','583','2,693','337','379','0','7,285','7,226','504','1,781','6,846','6,628','2,513','471','2,784','830','1,174','2,668','3,507','2,858','4,198','2,464'];
const cities = ['城市','广州','合肥','上海','杭州','北京','南京','西安','深圳','武汉','天津','重庆','成都'];
const early = ['8月上旬逾期金额',130407,80987,132101,71793,15046,44183,11064,46388,13867,11014,1567,675];
const mid = ['8月中旬逾期金额',108732,49934,66758,52871,17074,27410,39856,20647];
const late = ['8月下旬逾期金额',220129,145421,70073,70422,102594,53640,73501,12023];
const trend = ['逾期趋势',[17,21,3],[15,21,3],[3,21,20],[3,21,4],[21,20,3],[9,21,3],[21,13,3],[3,21,12]];
const midRate = ['8月中旬逾期环比','-17%','-38%','-49%','-26%','13%','-38%','260%','-55%'];
const lateRate = ['8月下旬逾期环比','102%','191%','5%','33%','501%','96%','84%','-42%'];
const total = ['8月逾期总和',459268,276342,268932,195086,134714,125233,124421,79058,61514,48236,39650,24431];

const cell = 'h-[25px] overflow-visible border-r border-b border-[#dcdcdc] p-0 pt-[2px] pl-[3px] leading-[22px]';
const td = (v, extra = '') => `<td class="${cell} ${extra}">${v ?? ''}</td>`;
const bar = v => typeof v !== 'number' ? td(v) :
  `<td class="${cell} relative"><span class="absolute top-px left-px h-[21px] border border-[#ffb628] bg-linear-to-r from-[#ffb628] to-[#ffefd6]" style="width:${Math.max(1, Math.round(v / 220129 * 173))}px"></span><span class="relative">${v}</span></td>`;
const spark = p => !Array.isArray(p) ? td(p) :
  `<td class="${cell} relative"><svg class="absolute top-0 left-0 h-6 w-[176px]" fill="#ffc000"><polyline points="30,${p[0]} 87,${p[1]} 145,${p[2]}" fill="none" stroke="#ffc61a" stroke-width="1.500"/>${p.map((y, i) => `<circle cx="${[30, 87, 145][i]}" cy="${y}" r="2"/>`).join('')}</svg></td>`;

document.getElementById('cols').innerHTML = colNames.map(c => {
  if (!c) return '<th class="border-r border-b border-r-[#dcdcdc] border-b-[#a0a0a0] bg-[#f0f0f0] p-0"><svg class="mt-2 ml-[18px] h-[18px] w-[18px]" viewBox="0 0 18 18"><path d="M18 0v18H0z" fill="#dcdcdc"/></svg></th>';
  return c === 'X'
    ? '<th class="border-r border-b-2 border-r-[#bbb] border-b-[#107c41] bg-[#e0e0e0] p-0 pt-[3px] leading-[22px] font-light text-[#217346]">X</th>'
    : `<th class="border-r border-b border-r-[#dcdcdc] border-b-[#a0a0a0] bg-[#f0f0f0] p-0 pt-[2px] leading-[22px] font-light text-[#444] ${c === 'Y' ? 'pl-10' : ''}">${c}</th>`;
}).join('');

let html = '';
for (let i = 0; i < 28; i++) {
  const n = i + 1;
  const period = i === 0 ? '上中下旬IFS' : n <= 4 ? '上旬' : n <= 12 ? '下旬' : n <= 22 ? '上旬' : '中旬';
  html += '<tr>' +
    (n === 13
      ? '<th class="h-[25px] border-r-2 border-b border-r-[#217346] border-b-[#dcdcdc] bg-[#e0e0e0] p-0 pt-[2px] leading-[22px] font-light text-[#217346]">13</th>'
      : `<th class="h-[25px] border-r border-b border-r-[#a0a0a0] border-b-[#dcdcdc] bg-[#f0f0f0] p-0 pt-[2px] leading-[22px] font-light text-[#444]">${n}</th>`) +
    td(interest[i], i ? 'pr-[3px] text-right' : '') +
    td(i === 0 ? '逾期金额' : n === 19 ? '4,193' : '0', i ? 'pr-[3px] text-right' : '') +
    td(period) + td('') + td(cities[i]) +
    bar(early[i]) + bar(mid[i]) + bar(late[i]) + spark(trend[i]) +
    td(midRate[i]) + td(lateRate[i]) + td(total[i]) + td('') + td('') + '</tr>';
}
document.getElementById('rows').innerHTML = html;

const item = (name, extra) => `<label class="flex h-8 items-center pl-[3px] ${extra}"><span class="mr-8 grid place-items-center"><input type="checkbox" checked class="col-start-1 row-start-1 h-5 w-5 appearance-none rounded bg-[#005fb8]"><svg class="pointer-events-none col-start-1 row-start-1 h-2 w-[10px]" viewBox="0 0 10 8" fill="none" stroke="#fff"><path d="M0 4l3.500 3.500L10 .5"/></svg></span>${name}</label>`;
document.getElementById('series').innerHTML = item('8月逾期总和', 'bg-[#e0e0e6]');
document.getElementById('cats').innerHTML = cities.slice(1, 6).map(c => item(c, 'bg-white')).join('');
</script>
</body>
</html>
